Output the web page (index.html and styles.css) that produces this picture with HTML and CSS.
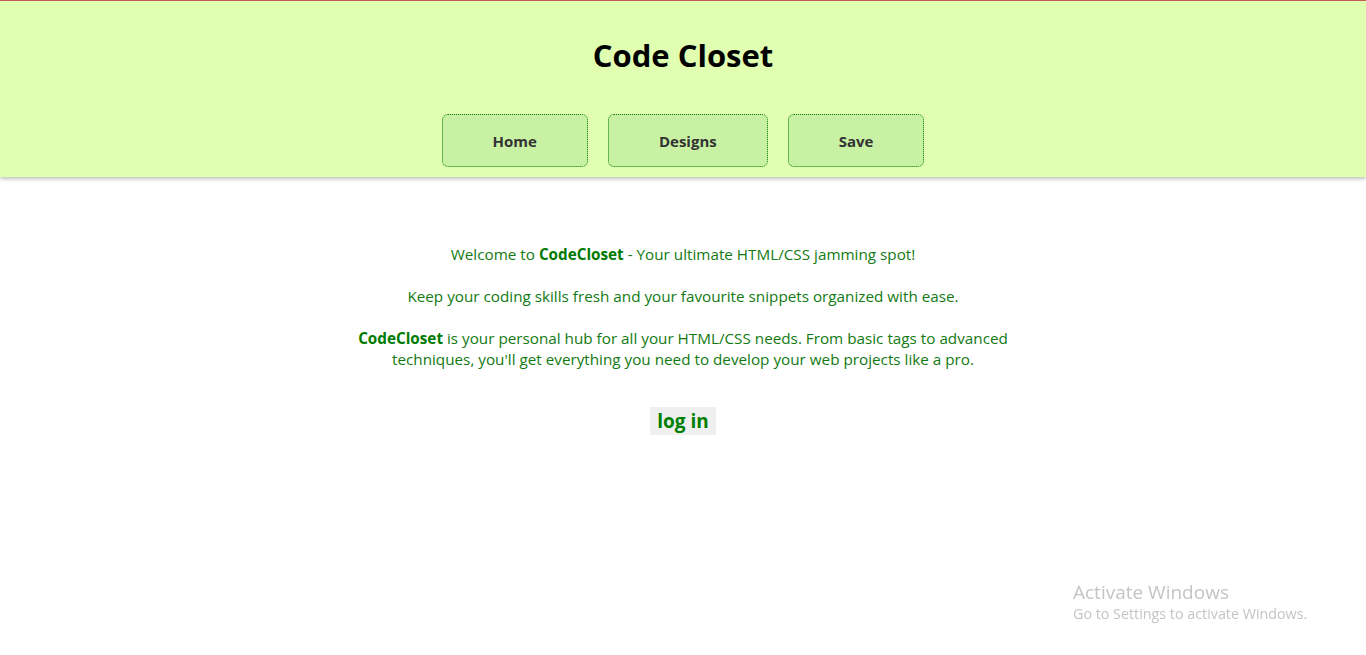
FILE: index.html
```html
<!DOCTYPE html>
<html lang="en">
<head>
    <meta charset="UTF-8">
    <meta name="viewport" content="width=device-width, initial-scale=1.0">
    <title>Code Closet</title>
    <link rel="stylesheet" href="styles.css">
</head>
<body>
    <header class="site-header">
        <h1>Code Closet</h1>
        <nav class="nav">
            <a href="#" class="nav-btn">Home</a>
            <a href="#" class="nav-btn">Designs</a>
            <a href="#" class="nav-btn">Save</a>
        </nav>
    </header>
    <main class="intro">
        <p>Welcome to <b>CodeCloset</b> - Your ultimate HTML/CSS jamming spot!</p>
        <p>Keep your coding skills fresh and your favourite snippets organized with ease.</p>
        <p><b>CodeCloset</b> is your personal hub for all your HTML/CSS needs. From basic tags to advanced techniques, you'll get everything you need to develop your web projects like a pro.</p>
        <button class="login">log in</button>
    </main>
    <div class="activate">
        <div class="activate-title">Activate Windows</div>
        <div class="activate-sub">Go to Settings to activate Windows.</div>
    </div>
</body>
</html>
```

FILE: styles.css
```css
body {
    margin: 0;
    font-family: "Open Sans", "Noto Sans", sans-serif;
    background-color: white;
}
.site-header {
    background-color: #e0ffb1;
    border-top: 1px solid #c55a5a;
    height: 177px;
    box-shadow: 0 2px 4px rgba(0, 0, 0, 0.25);
    text-align: center;
    box-sizing: border-box;
    padding-top: 34px;
}
.site-header h1 {
    margin: 0;
    font-size: 31px;
    line-height: 40px;
    color: #000;
}
.nav {
    display: flex;
    justify-content: center;
    gap: 20px;
    margin-top: 39px;
}
.nav-btn {
    display: block;
    height: 53px;
    line-height: 53px;
    padding: 0 50px;
    box-sizing: border-box;
    background-color: #c8f1a3;
    border: 1px dotted #008000;
    border-radius: 6px;
    color: #333;
    font-weight: bold;
    font-size: 15px;
    text-decoration: none;
}
.intro {
    max-width: 670px;
    margin: 0 auto;
    padding-top: 67px;
    text-align: center;
    color: #137a13;
    font-size: 15.25px;
    line-height: 21px;
}
.intro p {
    margin: 0 0 21px;
}
.intro b {
    color: #007a00;
}
.login {
    margin-top: 16px;
    font-family: inherit;
    font-size: 19px;
    font-weight: bold;
    color: #008000;
    background-color: #efefef;
    border: none;
    padding: 0 7px;
    height: 28px;
    line-height: 28px;
}
.activate {
    position: fixed;
    left: 1073px;
    top: 580px;
    color: #c4c4c4;
    font-family: "Open Sans", sans-serif;
}
.activate-title {
    font-size: 19px;
    line-height: 24px;
}
.activate-sub {
    font-size: 14.3px;
    line-height: 20px;
}
```
